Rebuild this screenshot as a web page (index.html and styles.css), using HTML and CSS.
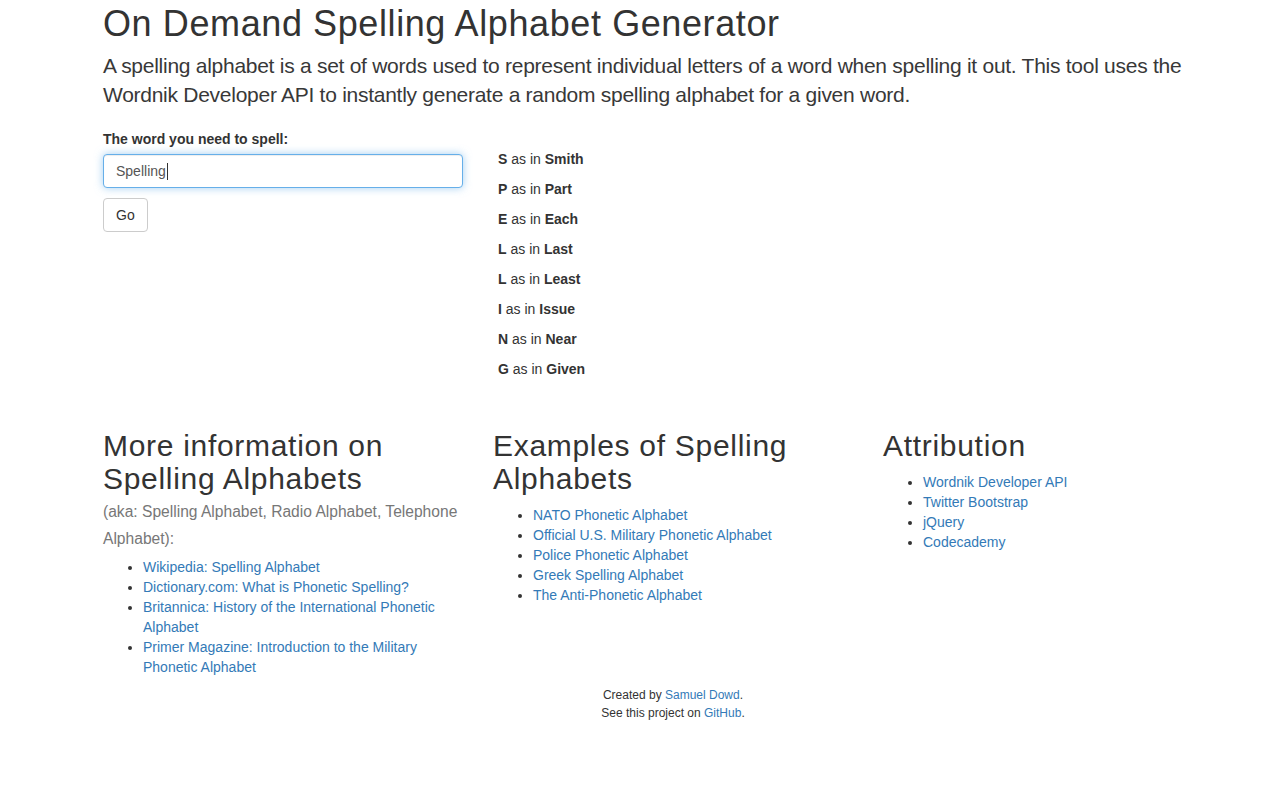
FILE: index.html
```html
<!DOCTYPE html>
<html lang="en">
<head>
<meta charset="utf-8">
<title>On Demand Spelling Alphabet Generator</title>
<link rel="stylesheet" href="styles.css">
</head>
<body>
<div class="container">
  <h1 class="title">On Demand Spelling Alphabet Generator</h1>
  <p class="lead">A spelling alphabet is a set of words used to represent individual letters of a word when spelling it out. This tool uses the Wordnik Developer API to instantly generate a random spelling alphabet for a given word.</p>

  <div class="row top-row">
    <div class="col">
      <label class="field-label" for="word">The word you need to spell:</label>
      <div class="input focused"><span class="input-text">Spelling</span><span class="caret"></span></div>
      <button class="btn" type="button">Go</button>
    </div>
    <div class="col col-wide">
      <div class="results">
        <p class="result"><b>S</b> as in <b>Smith</b></p>
        <p class="result"><b>P</b> as in <b>Part</b></p>
        <p class="result"><b>E</b> as in <b>Each</b></p>
        <p class="result"><b>L</b> as in <b>Last</b></p>
        <p class="result"><b>L</b> as in <b>Least</b></p>
        <p class="result"><b>I</b> as in <b>Issue</b></p>
        <p class="result"><b>N</b> as in <b>Near</b></p>
        <p class="result"><b>G</b> as in <b>Given</b></p>
      </div>
    </div>
  </div>

  <div class="row info-row">
    <div class="col">
      <h2 class="section-title tight">More information on Spelling Alphabets</h2>
      <div class="aka">(aka: Spelling Alphabet, Radio Alphabet, Telephone Alphabet):</div>
      <ul class="links">
        <li><a href="#">Wikipedia: Spelling Alphabet</a></li>
        <li><a href="#">Dictionary.com: What is Phonetic Spelling?</a></li>
        <li><a href="#">Britannica: History of the International Phonetic Alphabet</a></li>
        <li><a href="#">Primer Magazine: Introduction to the Military Phonetic Alphabet</a></li>
      </ul>
    </div>
    <div class="col">
      <h2 class="section-title">Examples of Spelling Alphabets</h2>
      <ul class="links">
        <li><a href="#">NATO Phonetic Alphabet</a></li>
        <li><a href="#">Official U.S. Military Phonetic Alphabet</a></li>
        <li><a href="#">Police Phonetic Alphabet</a></li>
        <li><a href="#">Greek Spelling Alphabet</a></li>
        <li><a href="#">The Anti-Phonetic Alphabet</a></li>
      </ul>
    </div>
    <div class="col">
      <h2 class="section-title">Attribution</h2>
      <ul class="links">
        <li><a href="#">Wordnik Developer API</a></li>
        <li><a href="#">Twitter Bootstrap</a></li>
        <li><a href="#">jQuery</a></li>
        <li><a href="#">Codecademy</a></li>
      </ul>
    </div>
  </div>

  <footer class="footer">
    <div>Created by <a href="#">Samuel Dowd</a>.</div>
    <div>See this project on <a href="#">GitHub</a>.</div>
  </footer>
</div>
</body>
</html>
```

FILE: styles.css
```css
* {
  box-sizing: border-box;
}

html, body {
  margin: 0;
  padding: 0;
  background: #fff;
}

body {
  font-family: "Liberation Sans", Arial, Helvetica, sans-serif;
  font-size: 14px;
  line-height: 20px;
  color: #333;
}

a {
  color: #337ab7;
  text-decoration: none;
}

.container {
  width: 1170px;
  margin-left: 88px;
  padding: 0 15px;
}

.title {
  font-size: 36px;
  font-weight: normal;
  line-height: 39.6px;
  letter-spacing: 0.6px;
  margin: 4px 0 7px;
  color: #333;
}

.lead {
  font-size: 21px;
  line-height: 29.4px;
  font-weight: normal;
  letter-spacing: -0.27px;
  margin: 0 0 20px;
  color: #383838;
}

.row {
  display: flex;
  margin: 0 -15px;
}

.col {
  width: 390px;
  padding: 0 15px;
  flex: none;
}

.col-wide {
  width: 780px;
}

.field-label {
  display: block;
  font-weight: bold;
  line-height: 20px;
  margin-bottom: 5px;
}

.input {
  display: flex;
  align-items: center;
  width: 360px;
  height: 34px;
  padding: 6px 12px;
  font-size: 14px;
  color: #555;
  background: #fff;
  border: 1px solid #ccc;
  border-radius: 4px;
  margin-bottom: 10px;
}

.input.focused {
  border-color: #66afe9;
  box-shadow: inset 0 1px 1px rgba(0, 0, 0, .075), 0 0 8px rgba(102, 175, 233, .6);
}

.caret {
  display: inline-block;
  width: 1px;
  height: 17px;
  background: #333;
  margin-left: 1px;
}

.btn {
  display: block;
  height: 34px;
  padding: 6px 12px;
  font-family: inherit;
  font-size: 14px;
  line-height: 20px;
  color: #333;
  background: #fff;
  border: 1px solid #ccc;
  border-radius: 4px;
}

.results {
  padding: 20px 0 0 5px;
}

.result {
  margin: 0 0 10px;
  line-height: 20px;
}

.info-row {
  margin-top: 20px;
}

.section-title {
  font-size: 30px;
  font-weight: normal;
  line-height: 33px;
  letter-spacing: 0.7px;
  margin: 20px 0 10px;
  color: #333;
}

.section-title.tight {
  margin-bottom: 4px;
}

.aka {
  font-size: 15.6px;
  line-height: 26.4px;
  color: #777;
  margin-bottom: 5px;
}

.links {
  margin: 0 0 10px;
  padding-left: 40px;
}

.links li {
  line-height: 20px;
}

.footer {
  text-align: center;
  font-size: 12px;
  line-height: 18px;
  margin-top: -1px;
}
```
